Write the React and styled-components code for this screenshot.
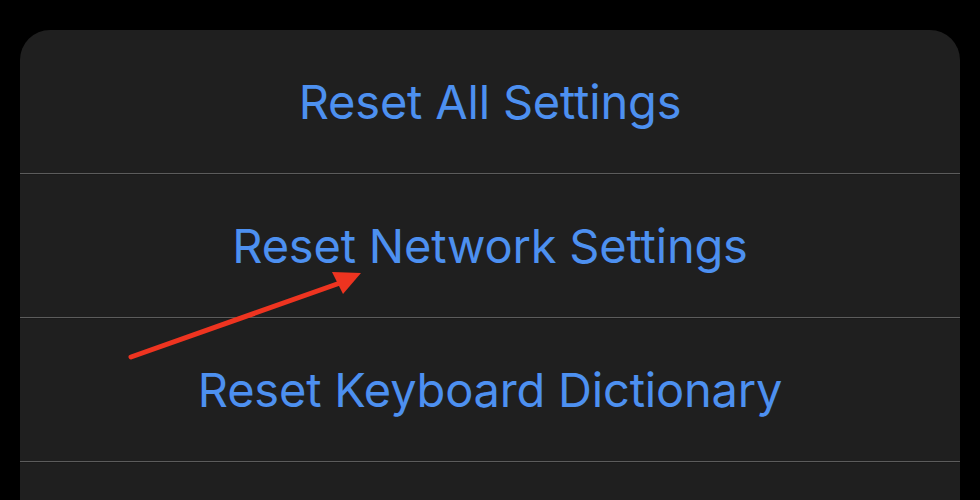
import React from "react";
import styled, { createGlobalStyle } from "styled-components";

const Global = createGlobalStyle`
  html, body { margin: 0; padding: 0; background: #000; }
  body { font-family: Inter, "Noto Sans", sans-serif; overflow: hidden; }
`;

const Page = styled.div`
  position: relative;
  width: 980px;
  height: 500px;
  padding: 30px 20px 0;
  box-sizing: border-box;
  background: #000;
  overflow: hidden;
`;

const Card = styled.div`
  background: #1f1f1f;
  border-radius: 30px 30px 0 0;
  display: flex;
  flex-direction: column;
`;

const Row = styled.div`
  height: 143px;
  display: flex;
  align-items: center;
  justify-content: center;
  border-top: ${(p) => (p.$first ? "none" : "1px solid #5c5c5c")};
  box-shadow: ${(p) => (p.$first ? "none" : "inset 0 1px 0 #1a1a1a")};
`;

const Label = styled.span`
  color: #4d90f0;
  font-size: 47px;
  font-weight: 400;
  letter-spacing: -0.2px;
  line-height: 1;
`;

const Arrow = styled.svg`
  position: absolute;
  left: 0;
  top: 0;
  pointer-events: none;
`;

export default function App() {
  const items = ["Reset All Settings", "Reset Network Settings", "Reset Keyboard Dictionary", ""];
  return (
    <>
      <Global />
      <Page>
        <Card>
          {items.map((t, i) => (
            <Row key={i} $first={i === 0}>
              {t && <Label>{t}</Label>}
            </Row>
          ))}
        </Card>
        <Arrow width="980" height="500" viewBox="0 0 980 500">
          <line x1="131" y1="357" x2="340" y2="283" stroke="#ee3420" strokeWidth="5" strokeLinecap="round" />
          <polygon points="361,273 332,272 343,294" fill="#ee3420" />
        </Arrow>
      </Page>
    </>
  );
}
